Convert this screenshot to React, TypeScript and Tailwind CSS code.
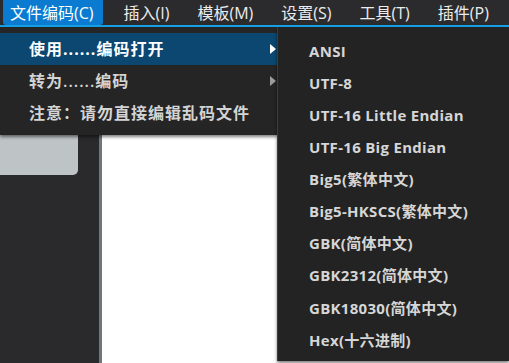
import { ReactNode } from 'react'

const menuItems = ['插入(I)', '模板(M)', '设置(S)', '工具(T)', '插件(P)']

const encodings = [
  'ANSI',
  'UTF-8',
  'UTF-16 Little Endian',
  'UTF-16 Big Endian',
  'Big5(繁体中文)',
  'Big5-HKSCS(繁体中文)',
  'GBK(简体中文)',
  'GBK2312(简体中文)',
  'GBK18030(简体中文)',
  'Hex(十六进制)',
]

const font = "font-['Open_Sans','Noto_Sans_CJK_SC',sans-serif]"

const Arrow = ({ color }: { color: string }) => (
  <svg width="6" height="10" viewBox="0 0 6 10" className="absolute right-[2px]">
    <path d="M0 0 L6 5 L0 10 Z" fill={color} />
  </svg>
)

const DropRow = ({ active, children, arrow }: { active?: boolean; children: ReactNode; arrow?: boolean }) => (
  <div
    className={`relative flex items-center h-[32px] pl-[29px] text-[16px] tracking-[1px] ${
      active ? 'bg-[#0b4770] text-white font-bold' : 'text-[#d4d4d4] font-semibold'
    }`}
  >
    {children}
    {arrow && <Arrow color={active ? '#ffffff' : '#9c9c9c'} />}
  </div>
)

export default function App() {
  return (
    <div className={`relative w-[509px] h-[363px] overflow-hidden bg-[#2a2a2c] ${font}`}>
      {/* 菜单栏 */}
      <div className="flex items-stretch h-[25px] bg-[#2b2b2e] pl-[3px] gap-[14px] text-[16px] text-[#ececec]">
        <div className="flex items-center pl-[7px] pr-[9px] bg-[#0a7bd0] rounded-b-[3px] text-white">文件编码(C)</div>
        {menuItems.map((m) => (
          <div key={m} className="flex items-center px-[7px]">
            {m}
          </div>
        ))}
      </div>
      <div className="h-[2px] bg-[#16a2e8]" />

      {/* 主体 */}
      <div className="flex h-[336px]">
        <div className="w-[99px] bg-[#2a2a2c]">
          <div className="w-[78px] h-[148px] bg-[#bec3c6] rounded-br-[5px]" />
        </div>
        <div className="w-[3px] bg-[#6e7878]" />
        <div className="flex-1 bg-white" />
      </div>

      {/* 下拉菜单 */}
      <div className="absolute left-0 top-[27px] w-[278px] h-[108px] bg-[#252526] pt-[6px] shadow-[0_2px_3px_rgba(0,0,0,0.5)]">
        <DropRow active arrow>
          使用......编码打开
        </DropRow>
        <DropRow arrow>转为......编码</DropRow>
        <DropRow>注意：请勿直接编辑乱码文件</DropRow>
      </div>

      {/* 子菜单 */}
      <div className="absolute left-[277px] top-[27px] w-[232px] h-[334px] bg-[#232323] border-l border-[#3c3c3c] pt-[8px] shadow-[0_2px_3px_rgba(0,0,0,0.5)]">
        {encodings.map((e) => (
          <div key={e} className="flex items-center h-[32.1px] pl-[31px] text-[15px] tracking-[0.3px] font-bold text-[#d6d6d6]">
            {e}
          </div>
        ))}
      </div>
    </div>
  )
}
